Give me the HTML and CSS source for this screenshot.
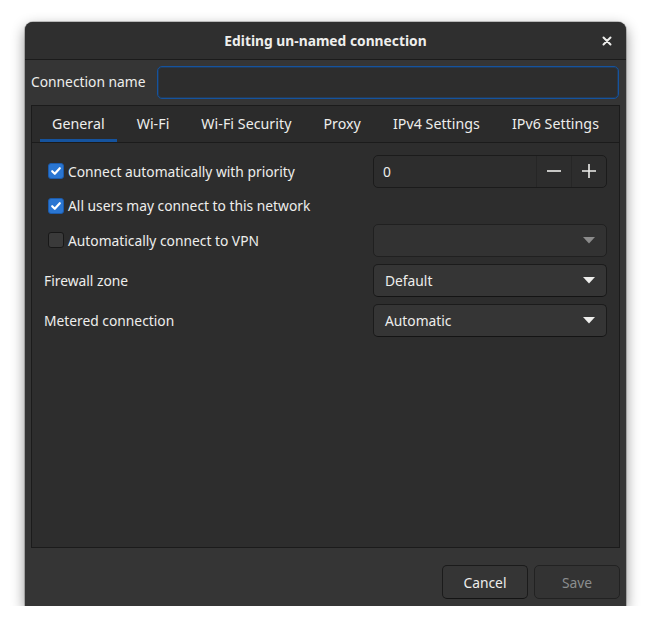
FILE: index.html
```html
<!DOCTYPE html>
<html>
<head>
<meta charset="utf-8">
<link rel="stylesheet" href="styles.css">
</head>
<body>
<div class="window">
  <div class="titlebar">
    <div class="title">Editing un-named connection</div>
    <div class="close">
      <svg width="10" height="10" viewBox="0 0 10 10"><path d="M1.5 1.5 L8.5 8.5 M8.5 1.5 L1.5 8.5" stroke="#eeeeec" stroke-width="2" stroke-linecap="round"/></svg>
    </div>
  </div>
  <div class="body">
    <div class="name-row">
      <span class="name-label">Connection name</span>
      <div class="entry focused"></div>
    </div>
    <div class="notebook">
      <div class="tabs">
        <div class="tab active">General</div>
        <div class="tab">Wi-Fi</div>
        <div class="tab">Wi-Fi Security</div>
        <div class="tab">Proxy</div>
        <div class="tab">IPv4 Settings</div>
        <div class="tab">IPv6 Settings</div>
      </div>
      <div class="page">
        <div class="row">
          <label class="check"><span class="box on"><svg width="12" height="12" viewBox="0 0 12 12"><path d="M2.2 6.2 L4.8 8.8 L9.8 3.2" fill="none" stroke="#fff" stroke-width="2.2" stroke-linecap="round" stroke-linejoin="round"/></svg></span>Connect automatically with priority</label>
          <div class="spin">
            <div class="spin-val">0</div>
            <div class="spin-btn"><svg width="16" height="16" viewBox="0 0 16 16"><path d="M1 8 H15" stroke="#eeeeec" stroke-width="1.6"/></svg></div>
            <div class="spin-btn"><svg width="16" height="16" viewBox="0 0 16 16"><path d="M1 8 H15 M8 1 V15" stroke="#eeeeec" stroke-width="1.6"/></svg></div>
          </div>
        </div>
        <div class="row tall">
          <label class="check"><span class="box on"><svg width="12" height="12" viewBox="0 0 12 12"><path d="M2.2 6.2 L4.8 8.8 L9.8 3.2" fill="none" stroke="#fff" stroke-width="2.2" stroke-linecap="round" stroke-linejoin="round"/></svg></span>All users may connect to this network</label>
        </div>
        <div class="row">
          <label class="check"><span class="box"></span>Automatically connect to VPN</label>
          <div class="combo disabled"><span></span><svg class="arrow" width="12" height="7" viewBox="0 0 12 7"><path d="M0 0 H12 L6 6.5 Z" fill="#8b8b8b"/></svg></div>
        </div>
        <div class="row spaced">
          <span class="label">Firewall zone</span>
          <div class="combo"><span>Default</span><svg class="arrow" width="12" height="7" viewBox="0 0 12 7"><path d="M0 0 H12 L6 6.5 Z" fill="#eeeeec"/></svg></div>
        </div>
        <div class="row spaced">
          <span class="label">Metered connection</span>
          <div class="combo"><span>Automatic</span><svg class="arrow" width="12" height="7" viewBox="0 0 12 7"><path d="M0 0 H12 L6 6.5 Z" fill="#eeeeec"/></svg></div>
        </div>
      </div>
    </div>
    <div class="actions">
      <div class="btn">Cancel</div>
      <div class="btn insensitive">Save</div>
    </div>
  </div>
</div>
</body>
</html>
```

FILE: styles.css
```css
* { box-sizing: border-box; }
html, body { margin: 0; padding: 0; background: #ffffff; }
body {
  font-family: "Noto Sans", "DejaVu Sans", sans-serif;
  font-size: 13.8px;
  color: #eeeeec;
}
.window {
  margin: 22px 0 0 25px;
  width: 601px;
  height: 584px;
  background: #353535;
  border-radius: 8px 8px 0 0;
  box-shadow: 0 5px 14px rgba(0,0,0,0.45), 0 0 0 1px rgba(0,0,0,0.2);
  display: flex;
  flex-direction: column;
}
.titlebar {
  height: 38px;
  flex: none;
  background: #2f2f2f;
  border-bottom: 1px solid #1b1b1b;
  border-radius: 8px 8px 0 0;
  display: flex;
  align-items: center;
  justify-content: center;
  position: relative;
}
.title { font-weight: bold; font-size: 13.8px; padding-bottom: 1px; }
.close {
  position: absolute;
  right: 14px;
  top: 14px;
  width: 10px; height: 10px;
  display: flex;
}
.body {
  flex: 1;
  display: flex;
  flex-direction: column;
  padding: 6px 6px 7px 6px;
}
.name-row {
  display: flex;
  align-items: center;
  height: 33px;
  margin-right: 1px;
}
.name-label { width: 126px; padding-bottom: 2px; }
.entry {
  flex: 1;
  height: 33px;
  background: #2d2d2d;
  border: 1px solid #1b1b1b;
  border-radius: 5px;
}
.entry.focused { border-color: #15539e; box-shadow: inset 0 0 0 1px rgba(21,83,158,0.35); }
.notebook {
  margin-top: 6px;
  height: 443px;
  border: 1px solid #1b1b1b;
  background: #2d2d2d;
  display: flex;
  flex-direction: column;
}
.tabs {
  height: 37px;
  flex: none;
  background: #2b2b2b;
  border-bottom: 1px solid #1b1b1b;
  display: flex;
  padding: 0 4px;
  font-size: 14.2px;
  overflow: hidden;
  white-space: nowrap;
}
.tab {
  flex: none;
  margin: 0 4px;
  padding: 0 12px;
  display: flex;
  align-items: center;
  color: #eeeeec;
  border-bottom: 3px solid transparent;
  padding-top: 1px;
  letter-spacing: 0.05px;
  white-space: nowrap;
}
.tab.active { border-bottom-color: #15539e; }
.page {
  padding: 12px 12px 0 12px;
  display: flex;
  flex-direction: column;
}
.row {
  height: 32px;
  display: flex;
  align-items: center;
  justify-content: space-between;
}
.row.tall { height: 37px; }
.row.spaced { margin-top: 8px; }
.check { display: flex; align-items: center; margin-left: 4px; }
.box {
  width: 16px; height: 16px;
  border-radius: 3px;
  background: #3a3a3a;
  border: 1px solid #181818;
  margin-right: 4px;
  display: flex; align-items: center; justify-content: center;
}
.box.on { background: #2a76d2; border-color: #1c5bab; }
.spin {
  width: 234px; height: 33px;
  border: 1px solid #1b1b1b;
  border-radius: 5px;
  background: #2d2d2d;
  display: flex;
}
.spin-val { flex: 1; padding-left: 9px; display: flex; align-items: center; }
.spin-btn {
  width: 35px;
  border-left: 1px solid #262626;
  display: flex; align-items: center; justify-content: center;
}
.combo {
  width: 234px; height: 33px;
  border: 1px solid #1b1b1b;
  border-bottom-color: #141414;
  border-radius: 5px;
  background: #353535;
  display: flex;
  align-items: center;
  justify-content: space-between;
  padding: 0 11px 0 11px;
}
.combo.disabled { background: #323232; border-color: #202020; }
.arrow { display: block; }
.actions {
  margin-top: auto;
  display: flex;
  justify-content: flex-end;
  gap: 6px;
}
.btn {
  width: 86px; height: 34px;
  border: 1px solid #1b1b1b;
  border-bottom-color: #141414;
  border-radius: 5px;
  background: #353535;
  display: flex; align-items: center; justify-content: center;
}
.btn.insensitive { color: #8b8e8f; background: #333333; border-color: #222222; }
```
